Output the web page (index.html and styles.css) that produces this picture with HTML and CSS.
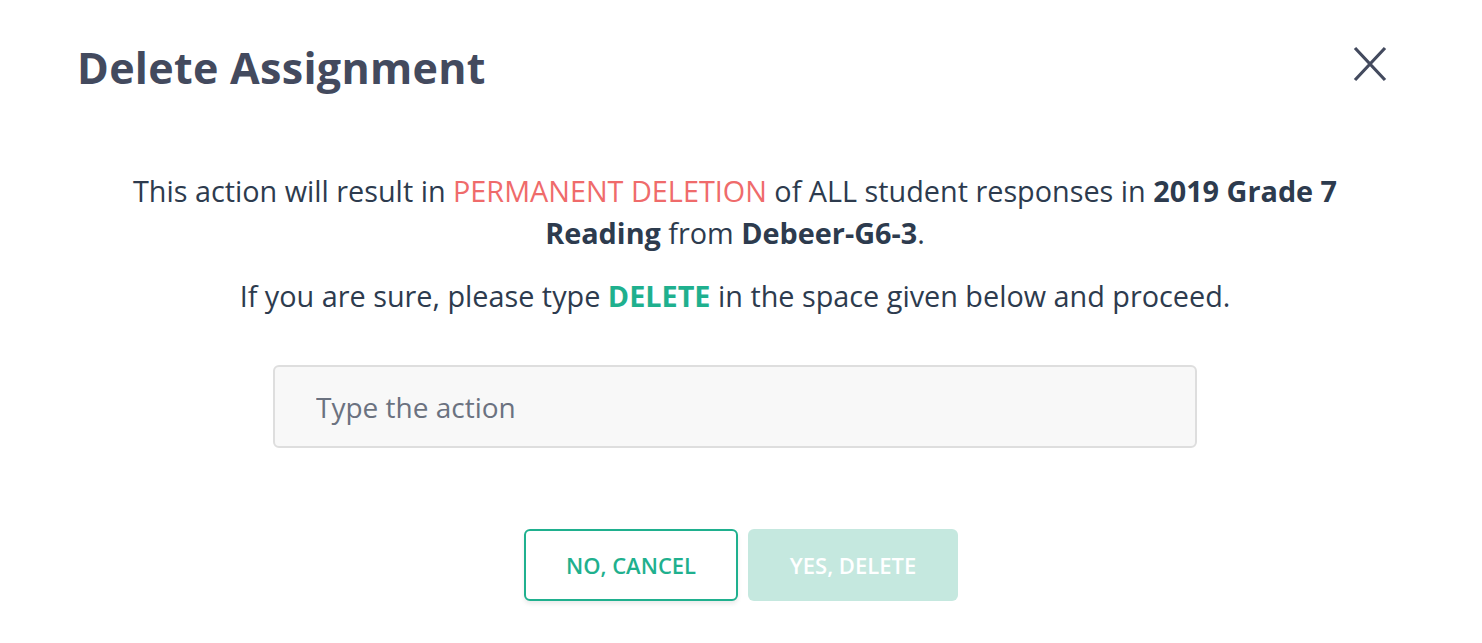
FILE: index.html
```html
<!DOCTYPE html>
<html lang="en">
  <head>
    <meta charset="UTF-8" />
    <meta name="viewport" content="width=device-width, initial-scale=1.0" />
    <title>Delete Assignment</title>
    <link rel="stylesheet" href="styles.css">
  </head>
  <body>
    <div class="modal">
      <div class="modal-header">
        <h2>Delete Assignment</h2>
        <button class="close-btn" aria-label="Close">
          <svg width="36" height="36" viewBox="0 0 36 36">
            <path d="M3 2 L33 34 M33 2 L3 34" stroke="#434a5e" stroke-width="3.2" fill="none" />
          </svg>
        </button>
      </div>

      <div class="modal-body">
        <p class="warning">
          This action will result in <span class="danger">PERMANENT DELETION</span> of ALL student responses in
          <strong>2019 Grade 7</strong> <strong>Reading</strong> from <strong>Debeer-G6-3</strong>.
        </p>
        <p class="confirm">
          If you are sure, please type <strong class="keyword">DELETE</strong> in the space given below and proceed.
        </p>
        <input type="text" class="action-input" placeholder="Type the action" />
      </div>

      <div class="modal-footer">
        <button class="btn btn-cancel">NO, CANCEL</button>
        <button class="btn btn-delete" disabled>YES, DELETE</button>
      </div>
    </div>
  </body>
</html>
```

FILE: styles.css
```css
* {
  margin: 0;
  padding: 0;
  box-sizing: border-box;
}
body {
  font-family: "Open Sans", sans-serif;
  background-color: #fff;
  color: #2d3b4e;
}

.modal {
  width: 1482px;
  height: 643px;
  padding: 38px 94px 0 77px;
}

.modal-header {
  display: flex;
  justify-content: space-between;
  align-items: center;
  height: 58px;
}

h2 {
  font-size: 43px;
  font-weight: 700;
  color: #434a5e;
  letter-spacing: 0.3px;
}

.close-btn {
  background: none;
  border: none;
  cursor: pointer;
  width: 36px;
  height: 36px;
  margin-top: -6px;
}

.modal-body {
  display: flex;
  flex-direction: column;
  align-items: center;
  text-align: center;
  padding-top: 74px;
  margin-left: -77px;
  margin-right: -82px;
}

.warning {
  max-width: 1240px;
  font-size: 28.8px;
  line-height: 42px;
}

.danger {
  color: #ef6b6b;
}

strong {
  font-weight: 700;
}

.confirm {
  margin-top: 21px;
  font-size: 28.8px;
  line-height: 42px;
}

.keyword {
  color: #1fb08e;
}

.action-input {
  margin-top: 48px;
  width: 924px;
  height: 83px;
  padding: 0 41px;
  background-color: #f8f8f8;
  border: 2px solid #dedede;
  border-radius: 6px;
  font-family: "Open Sans", sans-serif;
  font-size: 28px;
  color: #2d3b4e;
}

.action-input::placeholder {
  color: #6b7280;
}

.action-input:focus {
  outline: none;
  border-color: #1fb08e;
}

.modal-footer {
  display: flex;
  justify-content: center;
  gap: 10px;
  margin-top: 81px;
  margin-left: -77px;
  margin-right: -94px;
}

.btn {
  height: 72px;
  border-radius: 6px;
  font-family: "Open Sans", sans-serif;
  font-size: 22px;
  font-weight: 600;
  cursor: pointer;
}

.btn-cancel {
  width: 214px;
  background-color: #fff;
  color: #1fb08e;
  border: 2px solid #1fb08e;
  box-shadow: 0 3px 4px rgba(0, 0, 0, 0.08);
}

.btn-delete {
  width: 210px;
  background-color: #c5e8df;
  color: #fff;
  border: none;
  cursor: default;
}
```
